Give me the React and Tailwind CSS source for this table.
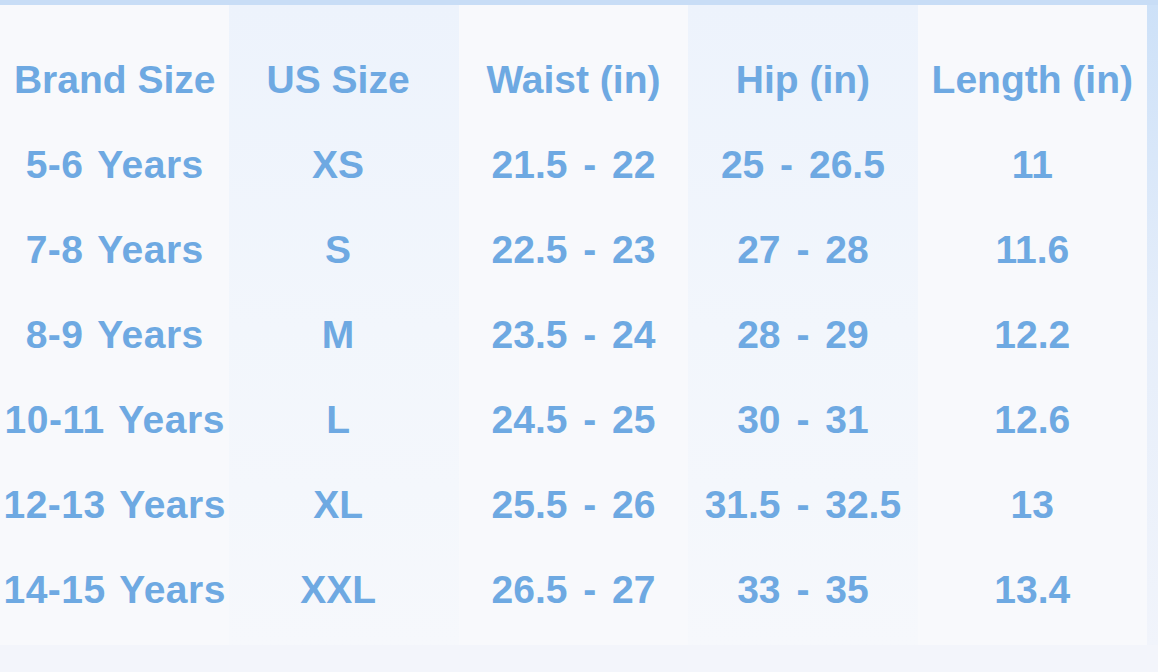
import React from "react";

const columns = [
  { head: "Brand Size", cells: ["5-6 Years", "7-8 Years", "8-9 Years", "10-11 Years", "12-13 Years", "14-15 Years"], tint: false, shift: "", extra: "tracking-[0.5px] [word-spacing:3px]" },
  { head: "US Size", cells: ["XS", "S", "M", "L", "XL", "XXL"], tint: true, shift: "pr-[12px]", extra: "" },
  { head: "Waist (in)", cells: ["21.5 - 22", "22.5 - 23", "23.5 - 24", "24.5 - 25", "25.5 - 26", "26.5 - 27"], tint: false, shift: "", extra: "[word-spacing:5px]" },
  { head: "Hip (in)", cells: ["25 - 26.5", "27 - 28", "28 - 29", "30 - 31", "31.5 - 32.5", "33 - 35"], tint: true, shift: "", extra: "[word-spacing:5px]" },
  { head: "Length (in)", cells: ["11", "11.6", "12.2", "12.6", "13", "13.4"], tint: false, shift: "", extra: "" },
];

export default function App() {
  return (
    <div className="w-[1158px] h-[672px] bg-[#f4f6fb] overflow-hidden flex flex-col" style={{ fontFamily: '"Liberation Sans", Arial, sans-serif' }}>
      <div className="h-[5px] bg-[#c8ddf6]" />
      <div className="flex">
        <div className="w-[1147px] grid grid-cols-5 bg-[#f8f9fc]">
          {columns.map((col) => (
            <div
              key={col.head}
              className={
                col.tint
                  ? "flex flex-col pt-[33px] pb-[12px] bg-gradient-to-b from-[#edf3fc] via-[#f2f6fc] to-[#f6f8fc]"
                  : "flex flex-col pt-[33px] pb-[12px]"
              }
            >
              <div className={`h-[85px] flex items-center justify-center whitespace-nowrap text-[39px] font-bold text-[#6ea9e2] ${col.shift}`}>
                {col.head}
              </div>
              {col.cells.map((c) => (
                <div
                  key={c}
                  className={`h-[85px] flex items-center justify-center whitespace-nowrap text-[39px] font-bold text-[#6ea9e2] ${col.shift} ${col.extra}`}
                >
                  {c}
                </div>
              ))}
            </div>
          ))}
        </div>
        <div className="w-[11px] bg-gradient-to-b from-[#cde1f8] via-[#e6eefa] to-[#f1f4fb]" />
      </div>
      <div className="flex-1 bg-[#f3f5fb]" />
    </div>
  );
}
